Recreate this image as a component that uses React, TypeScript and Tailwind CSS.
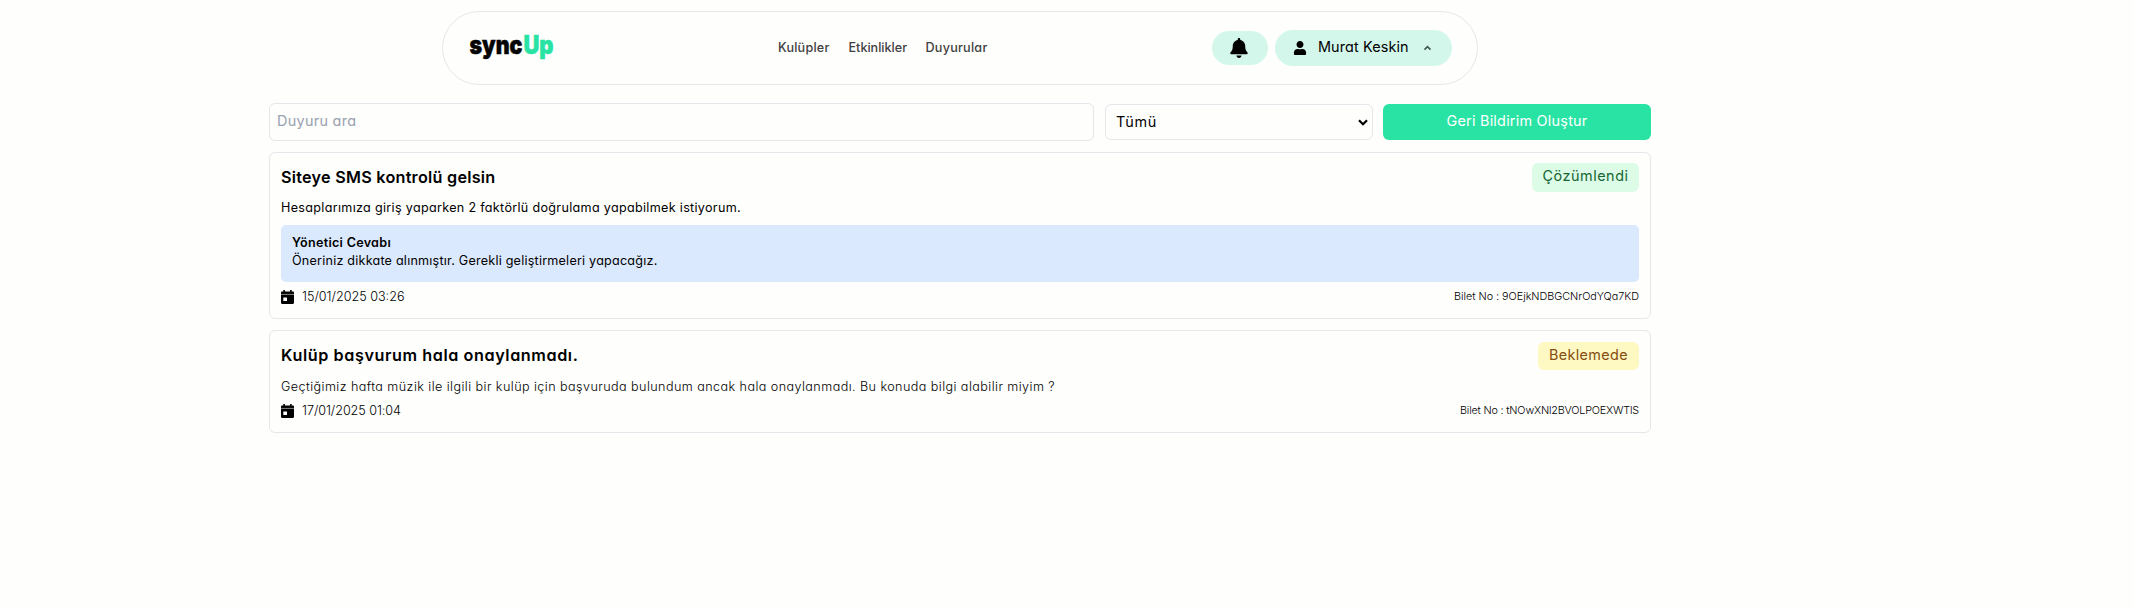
import type { ReactNode } from "react";
import { FaBell, FaUser } from "react-icons/fa";

function Logo() {
  return (
    <svg width="96" height="44" viewBox="0 0 96 44" className="block shrink-0" aria-label="syncUp">
      <g fontFamily="Inter, sans-serif" fontWeight="900" fontSize="25.5" strokeWidth="0.5">
        <text x="1.5" y="27.5" textLength="53" lengthAdjust="spacingAndGlyphs" fill="#050505" stroke="#050505">
          sync
        </text>
        <text x="55.5" y="27.5" textLength="30" lengthAdjust="spacingAndGlyphs" fill="#29e3a4" stroke="#29e3a4">
          Up
        </text>
      </g>
    </svg>
  );
}

function CalendarIcon() {
  return (
    <svg width="13" height="14" viewBox="0 0 13 14" className="block shrink-0">
      <path d="M2.3 0h1.6v1.4h5.2V0h1.6v1.4h1.1c.7 0 1.2.5 1.2 1.2v1.3H0V2.6c0-.7.5-1.2 1.2-1.2h1.1z" fill="#000" />
      <path d="M0 3.9h13v1.2H0z" fill="#777" />
      <path
        fillRule="evenodd"
        d="M0 5.1h13v7.7c0 .7-.5 1.2-1.2 1.2H1.2C.5 14 0 13.5 0 12.8zM2.3 7.400v3.700h3.700v-3.700z"
        fill="#000"
      />
    </svg>
  );
}

type TicketProps = {
  title: ReactNode;
  badge: ReactNode;
  description: ReactNode;
  answer?: ReactNode;
  date: ReactNode;
  ticket: ReactNode;
};

function Ticket({ title, badge, description, answer, date, ticket }: TicketProps) {
  return (
    <article className="rounded-[6px] border border-gray-200 px-[11px] pt-[10px] pb-[11px]">
      <div className="flex h-[29px] items-center justify-between">
        {title}
        {badge}
      </div>
      {description}
      {answer}
      <div className="mt-[6px] mb-px flex h-[18px] items-center justify-between">
        <div className="flex items-center gap-[8px]">
          <CalendarIcon />
          {date}
        </div>
        {ticket}
      </div>
    </article>
  );
}

export default function App() {
  return (
    <div className="min-h-[610px] w-full bg-[#fefefd] font-['Inter',sans-serif] text-black [font-feature-settings:'cv11']">
      <div className="w-[1920px] pt-[11px]">
        <header className="mx-auto flex h-[74px] w-[1036px] items-center rounded-full border border-gray-200 px-[25px]">
          <div className="w-[310px]">
            <Logo />
          </div>
          <nav className="flex flex-1 items-center text-[12.6px] leading-[18px] font-medium text-[#404040]">
            <a className="w-[70.5px] tracking-[0.21px]">Kulüpler</a>
            <a className="w-[77px]">Etkinlikler</a>
            <a className="tracking-[0.25px]">Duyurular</a>
          </nav>
          <div className="flex items-center gap-[7px]">
            <button className="flex h-[34px] w-[56px] items-center justify-center rounded-full bg-[#d4f7ec] pr-[2px] pb-px">
              <FaBell className="h-[20px] w-[18px]" />
            </button>
            <button className="flex h-[36px] w-[177px] items-center rounded-full bg-[#d4f7ec] pl-[18px]">
              <FaUser className="h-[14px] w-[14px]" />
              <span className="ml-[11px] pb-[2px] text-[14.4px] leading-[20px] tracking-[0.12px]">Murat Keskin</span>
              <svg width="9" height="6" viewBox="0 0 9 6" className="ml-[14px]">
                <path d="M1.5 4.6 4.5 1.700 7.5 4.600" fill="none" stroke="#3f5750" strokeWidth="1.6" />
              </svg>
            </button>
          </div>
        </header>

        <main className="mx-auto mt-[18px] flex w-[1382px] flex-col gap-[11px]">
          <div className="flex h-[38px] items-center">
            <div className="flex h-[38px] w-[825px] items-center rounded-[6px] border border-gray-200 pb-[2px] pl-[7px] text-[14.4px] tracking-[0.3px] text-gray-400">
              Duyuru ara
            </div>
            <div className="ml-[11px] flex h-[36px] w-[268px] items-center justify-between rounded-[6px] border border-gray-200 pr-[4px] pl-[10px] text-[14.4px] tracking-[0.7px]">
              Tümü
              <svg width="10" height="7" viewBox="0 0 10 7">
                <path d="M1 1.2 5 5.200 9 1.200" fill="none" stroke="#000" strokeWidth="2.2" />
              </svg>
            </div>
            <button className="ml-[10px] flex h-[36px] w-[268px] items-center justify-center rounded-[6px] bg-[#29e3a4] pb-[2px] text-[14.4px] tracking-[0.24px] text-white">
              Geri Bildirim Oluştur
            </button>
          </div>

          <Ticket
            title={<h2 className="text-[16.2px] font-semibold tracking-[0.25px]">Siteye SMS kontrolü gelsin</h2>}
            badge={
              <span className="mb-px flex h-[29px] w-[107px] items-center justify-center rounded-[6px] bg-[#dcfce7] pb-[2px] text-[14.4px] tracking-[0.53px] text-[#166534]">
                Çözümlendi
              </span>
            }
            description={
              <p className="mt-[6px] text-[12.6px] leading-[19px] tracking-[0.309px]">
                Hesaplarımıza giriş yaparken 2 faktörlü doğrulama yapabilmek istiyorum.
              </p>
            }
            answer={
              <div className="mt-[8px] h-[57px] rounded-[5px] bg-[#dbe9fe] px-[11px] pt-[9px] text-[12.6px] leading-[18px]">
                <p className="font-semibold tracking-[0.28px]">Yönetici Cevabı</p>
                <p className="tracking-[0.215px]">Öneriniz dikkate alınmıştır. Gerekli geliştirmeleri yapacağız.</p>
              </div>
            }
            date={<span className="pb-px text-[12.6px] leading-[17px] font-light">15/01/2025 03:26</span>}
            ticket={
              <span className="text-[10.8px] leading-[16px] font-light tracking-[-0.02px]">
                Bilet No : 9OEjkNDBGCNrOdYQa7KD
              </span>
            }
          />

          <Ticket
            title={<h2 className="pb-px text-[16.2px] font-semibold tracking-[0.58px]">Kulüp başvurum hala onaylanmadı.</h2>}
            badge={
              <span className="flex h-[28px] w-[101px] items-center justify-center rounded-[6px] bg-[#fef8c3] pb-[2px] text-[14.4px] tracking-[0.36px] text-[#854d0e]">
                Beklemede
              </span>
            }
            description={
              <p className="mt-[7px] text-[12.6px] leading-[19px] font-light tracking-[0.429px]">
                Geçtiğimiz hafta müzik ile ilgili bir kulüp için başvuruda bulundum ancak hala onaylanmadı. Bu konuda
                bilgi alabilir miyim ?
              </p>
            }
            date={
              <span className="pb-px text-[12.6px] leading-[17px] font-light tracking-[-0.05px]">17/01/2025 01:04</span>
            }
            ticket={
              <span className="text-[10.8px] leading-[16px] font-light tracking-[-0.18px]">
                Bilet No : tNOwXNl2BVOLPOEXWTlS
              </span>
            }
          />
        </main>
      </div>
    </div>
  );
}
